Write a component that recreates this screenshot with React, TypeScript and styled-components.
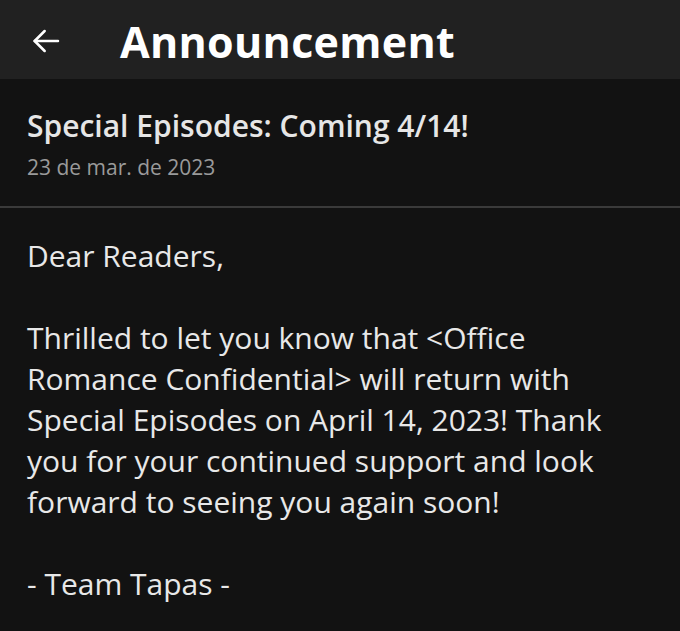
import React from "react";
import styled, { createGlobalStyle } from "styled-components";

const Global = createGlobalStyle`
  html, body { margin: 0; padding: 0; background: #121212; }
  body { font-family: "Open Sans", "Noto Sans", sans-serif; }
`;

const Page = styled.div`
  width: 680px;
  min-height: 631px;
  background: #121212;
  overflow: hidden;
`;

const TopBar = styled.header`
  height: 79px;
  background: #212121;
  display: flex;
  align-items: center;
  padding-left: 30px;
  padding-top: 3px;
  box-sizing: border-box;
  gap: 58px;
`;

const BackButton = styled.button`
  background: none;
  border: none;
  padding: 0;
  width: 32px;
  height: 32px;
  display: flex;
  align-items: center;
  justify-content: center;
  color: #fff;
`;

const BarTitle = styled.h1`
  margin: 0;
  color: #fff;
  font-size: 43px;
  font-weight: 700;
  letter-spacing: 0.3px;
  line-height: 1;
`;

const Meta = styled.section`
  padding: 27px 27px 0;
  height: 129px;
  box-sizing: border-box;
  border-bottom: 2px solid #3a3a3a;
`;

const PostTitle = styled.h2`
  margin: 0;
  color: #e6e6e6;
  font-size: 30px;
  font-weight: 600;
  line-height: 40px;
`;

const PostDate = styled.div`
  margin-top: 7px;
  color: #9a9a9a;
  font-size: 21px;
  line-height: 28px;
`;

const Body = styled.article`
  padding: 27px 27px 0;
  color: #e8e8e8;
  font-size: 30px;
  line-height: 41px;
  white-space: pre-line;
`;

const text = `Dear Readers,

Thrilled to let you know that <Office
Romance Confidential> will return with
Special Episodes on April 14, 2023! Thank
you for your continued support and look
forward to seeing you again soon!

- Team Tapas -`;

export default function App() {
  return (
    <Page>
      <Global />
      <TopBar>
        <BackButton aria-label="Back">
          <svg width="32" height="32" viewBox="0 0 24 24" fill="none" stroke="currentColor" strokeWidth="1.9" strokeLinecap="round" strokeLinejoin="round">
            <path d="M21 12H3.5" />
            <path d="M11 4.5L3.5 12l7.5 7.5" />
          </svg>
        </BackButton>
        <BarTitle>Announcement</BarTitle>
      </TopBar>
      <Meta>
        <PostTitle>Special Episodes: Coming 4/14!</PostTitle>
        <PostDate>23 de mar. de 2023</PostDate>
      </Meta>
      <Body>{text}</Body>
    </Page>
  );
}
